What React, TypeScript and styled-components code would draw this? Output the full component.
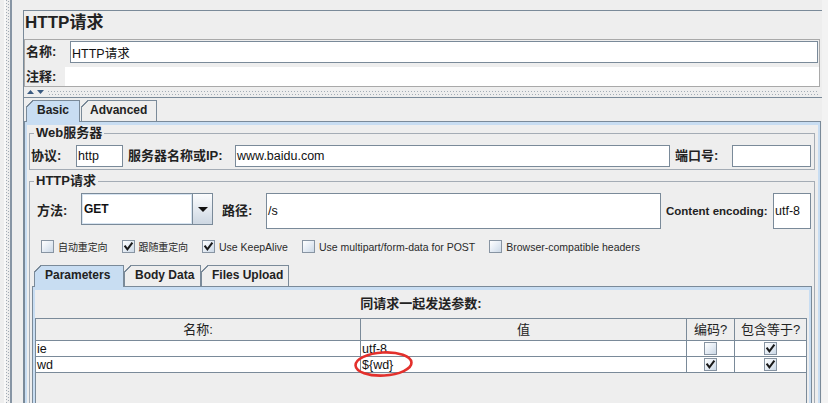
import React from "react";
import styled, { createGlobalStyle } from "styled-components";

const DARK = "#7a8a99";
const BLUE = "#c8ddf2";
const BG = "#eeeeee";
const ETCH = "#a4acb5";
const FONT = `"Liberation Sans", "Noto Sans CJK SC", sans-serif`;

const GlobalStyle = createGlobalStyle`
  * { box-sizing: border-box; }
  html, body { margin: 0; padding: 0; background: ${BG}; }
  body { font-family: ${FONT}; color: #1e1e1e; }
  #root { width: 828px; height: 403px; overflow: hidden; }
`;

const Page = styled.div`
  display: flex;
  align-items: flex-start;
  width: 828px;
  height: 403px;
  overflow: hidden;
  background: ${BG};
`;

const SideSplitter = styled.div`
  flex: none;
  align-self: stretch;
  width: 12px;
  padding-left: 6px;
  border-right: 2px solid #8795a4;
  background: linear-gradient(to right, ${BG} 0 4px, #f8f8f8 4px 6px, ${BG} 6px);
`;

const Grip = styled.div`
  width: 4px;
  height: 100%;
  background-image: repeating-linear-gradient(180deg, #a3acb6 0 1px, transparent 1px 3px),
    repeating-linear-gradient(180deg, #a3acb6 0 1px, transparent 1px 3px);
  background-size: 1px 100%, 1px 100%;
  background-position: 0 0, 2px 1px;
  background-repeat: no-repeat;
`;

const RightStrip = styled.div`
  flex: 1;
  align-self: stretch;
  background: #f3f3f3;
`;

const Main = styled.div`
  flex: none;
  width: 799px;
  margin: 10px 0 0 11px;
  border-left: 1px solid ${DARK};
  border-top: 1px solid ${DARK};
  display: flex;
  flex-direction: column;
`;

const Title = styled.div`
  height: 28px;
  line-height: 24px;
  padding-left: 1px;
  font-size: 17px;
  font-weight: bold;
  color: #222;
`;

const NamePanel = styled.div`
  margin-right: 2px;
  height: 48px;
  border: 1px solid #a9a9a9;
  display: flex;
  flex-direction: column;
`;

const FieldRow = styled.div<{ $h: number; $align?: string; $pr?: number }>`
  display: flex;
  align-items: ${(p) => p.$align ?? "center"};
  height: ${(p) => p.$h}px;
  padding: 0 ${(p) => p.$pr ?? 0}px 0 1px;
`;

const Label = styled.span<{ $w?: number; $ml?: number; $size?: number; $lh?: number }>`
  flex: none;
  width: ${(p) => (p.$w ? `${p.$w}px` : "auto")};
  margin-left: ${(p) => p.$ml ?? 0}px;
  font-size: ${(p) => p.$size ?? 13}px;
  line-height: ${(p) => p.$lh ?? 16}px;
  font-weight: bold;
  color: #222;
  white-space: nowrap;
`;

const Field = styled.div<{ $w?: number; $h?: number; $grow?: boolean; $plain?: boolean }>`
  flex: ${(p) => (p.$grow ? "1 1 0" : "none")};
  min-width: 0;
  width: ${(p) => (p.$w ? `${p.$w}px` : "auto")};
  height: ${(p) => p.$h ?? 22}px;
  display: flex;
  align-items: center;
  padding-left: 1px;
  background: #fff;
  border: ${(p) => (p.$plain ? "none" : `1px solid ${DARK}`)};
  font-size: 12.5px;
  color: #111;
  white-space: nowrap;
  overflow: hidden;
`;

const Splitter = styled.div`
  height: 10px;
  display: flex;
  align-items: center;
  padding: 0 3px 0 2px;
  gap: 2px;
`;

const DotLine = styled.div`
  flex: 1;
  height: 5px;
  margin-top: 3px;
  background-image: repeating-linear-gradient(90deg, #a3acb6 0 1px, transparent 1px 3px),
    repeating-linear-gradient(90deg, #a3acb6 0 1px, transparent 1px 3px);
  background-size: 100% 1px, 100% 1px;
  background-position: 0 0, 1px 3px;
  background-repeat: no-repeat;
`;

const Lower = styled.div`
  border-top: 1px solid ${DARK};
  padding-top: 2px;
  display: flex;
  flex-direction: column;
`;

const TabStrip = styled.div<{ $ml: number; $mt?: number }>`
  position: relative;
  z-index: 1;
  display: flex;
  align-items: flex-start;
  height: 22px;
  margin: ${(p) => p.$mt ?? 0}px 0 -1px ${(p) => p.$ml}px;
`;

const Tab = styled.div<{ $active?: boolean; $w: number }>`
  position: relative;
  flex: none;
  width: ${(p) => p.$w}px;
  height: ${(p) => (p.$active ? 22 : 21)}px;
  padding-left: 10px;
  line-height: 19px;
  font-size: 12px;
  font-weight: bold;
  color: #222;
  border: 1px solid ${DARK};
  border-bottom: none;
  background: ${(p) => (p.$active ? BLUE : BG)};
  white-space: nowrap;
  &::before {
    content: "";
    position: absolute;
    left: -1px;
    top: -1px;
    width: 7px;
    height: 7px;
    background: linear-gradient(
      to bottom right,
      ${BG} 0 46%,
      ${DARK} 46% 60%,
      transparent 60%
    );
  }
`;

const TabPanel = styled.div<{ $m?: string; $pad: string }>`
  margin: ${(p) => p.$m ?? "0 1px 0 0"};
  border: 1px solid ${DARK};
  box-shadow: inset 2px 3px 0 ${BLUE}, inset -2px 0 0 ${BLUE};
  padding: ${(p) => p.$pad};
  display: flex;
  flex-direction: column;
`;

const Group = styled.fieldset<{ $mt?: number }>`
  margin: ${(p) => p.$mt ?? 0}px 0 0 0;
  padding: 0 0 2px 0;
  min-width: 0;
  border: 1px solid ${ETCH};
  display: flex;
  flex-direction: column;
`;

const Legend = styled.legend`
  margin-left: 4px;
  padding: 0 2px;
  font-size: 13px;
  line-height: 14px;
  font-weight: bold;
  color: #222;
`;

const Row = styled.div<{ $mt: number; $h: number; $pl: number; $pr?: number }>`
  display: flex;
  align-items: center;
  height: ${(p) => p.$h}px;
  margin-top: ${(p) => p.$mt}px;
  padding: 0 ${(p) => p.$pr ?? 0}px 0 ${(p) => p.$pl}px;
`;

const Combo = styled.div`
  flex: none;
  align-self: flex-start;
  width: 132px;
  height: 32px;
  display: flex;
  border: 1px solid ${DARK};
  background: #fff;
`;

const ComboValue = styled.div`
  flex: 1;
  display: flex;
  align-items: center;
  padding-left: 2px;
  font-size: 12px;
  font-weight: bold;
  color: #111;
  box-shadow: inset 0 0 0 1px #d7e4f1;
`;

const ComboButton = styled.div`
  flex: none;
  width: 20px;
  display: flex;
  align-items: center;
  justify-content: center;
  border-left: 1px solid ${DARK};
  background: linear-gradient(180deg, #fbfcfd 0%, #e2e8ef 55%, #cdd7e2 100%);
`;

const CheckRow = styled.div`
  display: flex;
  align-items: center;
  height: 13px;
  margin-top: 11px;
  padding-left: 11px;
`;

const CheckItem = styled.label`
  display: flex;
  align-items: center;
  gap: 4px;
  margin-right: 14px;
  font-size: 10.5px;
  color: #2a2a2a;
  white-space: nowrap;
`;

const Cjk = styled.span`
  font-size: 10px;
  letter-spacing: -0.1px;
`;

const Box = styled.span`
  flex: none;
  width: 13px;
  height: 13px;
  border: 1px solid #8794a2;
  background: linear-gradient(135deg, #ffffff 0%, #e6edf5 50%, #cbd8e6 100%);
  display: inline-flex;
  align-items: center;
  justify-content: center;
`;

const Caption = styled.div`
  height: 31px;
  padding-top: 2px;
  line-height: 29px;
  text-align: center;
  font-size: 13px;
  font-weight: bold;
  color: #222;
`;

const TableWrap = styled.div`
  height: 130px;
  border: 1px solid ${DARK};
  border-bottom: none;
  background: ${BG};
`;

const GridRow = styled.div<{ $h: number }>`
  display: grid;
  grid-template-columns: 325px 326px 48px 71px;
  height: ${(p) => p.$h}px;
`;

const HeadCell = styled.div<{ $last?: boolean }>`
  border-right: ${(p) => (p.$last ? "none" : `1px solid ${DARK}`)};
  border-bottom: 1px solid ${DARK};
  text-align: center;
  line-height: 21px;
  font-size: 13px;
  color: #222;
  white-space: nowrap;
`;

const Cell = styled.div<{ $last?: boolean; $center?: boolean }>`
  position: relative;
  display: flex;
  align-items: center;
  justify-content: ${(p) => (p.$center ? "center" : "flex-start")};
  padding-left: ${(p) => (p.$center ? 0 : 1)}px;
  background: #fff;
  border-right: ${(p) => (p.$last ? "none" : `1px solid ${DARK}`)};
  border-bottom: 1px solid ${DARK};
  font-size: 12.5px;
  color: #111;
  white-space: nowrap;
`;

const Mark = styled.svg`
  position: absolute;
  left: -7px;
  top: -6px;
  overflow: visible;
  pointer-events: none;
`;

const CheckGlyph = () => (
  <svg width="11" height="11" viewBox="0 0 11 11">
    <path d="M2.2 5.4 L4.4 8.4 L8.8 2.4" fill="none" stroke="#1b1b1b" strokeWidth="2" strokeLinecap="square" />
  </svg>
);

const CheckBox = ({ on }: { on?: boolean }) => <Box>{on && <CheckGlyph />}</Box>;

const rows = [
  { name: "ie", value: "utf-8", enc: false, eq: true, mark: false },
  { name: "wd", value: "${wd}", enc: true, eq: true, mark: true },
];

export default function App() {
  return (
    <>
      <GlobalStyle />
      <Page>
        <SideSplitter>
          <Grip />
        </SideSplitter>
        <Main>
          <Title>HTTP请求</Title>
          <NamePanel>
            <FieldRow $h={24} $pr={1}>
              <Label $w={44}>名称:</Label>
              <Field $grow>HTTP请求</Field>
            </FieldRow>
            <FieldRow $h={22} $align="flex-end">
              <Label $w={39} $lh={19}>注释:</Label>
              <Field $grow $plain $h={19} />
            </FieldRow>
          </NamePanel>
          <Splitter>
            <svg width="20" height="6" viewBox="0 0 20 6">
              <path d="M1 5 L4.5 1 L8 5 Z" fill="#3a5a80" />
              <path d="M11 1 L18 1 L14.5 5 Z" fill="#3a5a80" />
            </svg>
            <DotLine />
          </Splitter>
          <Lower>
            <TabStrip $ml={2}>
              <Tab $active $w={54}>Basic</Tab>
              <Tab $w={76} style={{ marginLeft: 1, paddingLeft: 8 }}>Advanced</Tab>
            </TabStrip>
            <TabPanel $pad="4px 5px 0 4px">
              <Group>
                <Legend>Web服务器</Legend>
                <Row $mt={5} $h={22} $pl={1} $pr={3}>
                  <Label $w={45}>协议:</Label>
                  <Field $w={47}>http</Field>
                  <Label $w={107} $ml={5}>服务器名称或IP:</Label>
                  <Field $grow>www.baidu.com</Field>
                  <Label $w={57} $ml={5}>端口号:</Label>
                  <Field $w={79} />
                </Row>
              </Group>
              <Group $mt={4}>
                <Legend>HTTP请求</Legend>
                <Row $mt={5} $h={36} $pl={7} $pr={3}>
                  <Label $w={44}>方法:</Label>
                  <Combo>
                    <ComboValue>GET</ComboValue>
                    <ComboButton>
                      <svg width="10" height="5" viewBox="0 0 10 5">
                        <path d="M0 0 H10 L5 5 Z" fill="#111" />
                      </svg>
                    </ComboButton>
                  </Combo>
                  <Label $w={44} $ml={9}>路径:</Label>
                  <Field $grow $h={36}>/s</Field>
                  <Label $w={107} $ml={5} $size={11.5}>Content encoding:</Label>
                  <Field $w={38} $h={36}>utf-8</Field>
                </Row>
                <CheckRow>
                  <CheckItem><CheckBox /><Cjk>自动重定向</Cjk></CheckItem>
                  <CheckItem><CheckBox on /><Cjk>跟随重定向</Cjk></CheckItem>
                  <CheckItem><CheckBox on />Use KeepAlive</CheckItem>
                  <CheckItem><CheckBox />Use multipart/form-data for POST</CheckItem>
                  <CheckItem><CheckBox />Browser-compatible headers</CheckItem>
                </CheckRow>
                <TabStrip $ml={4} $mt={12}>
                  <Tab $active $w={90}>Parameters</Tab>
                  <Tab $w={77}>Body Data</Tab>
                  <Tab $w={88}>Files Upload</Tab>
                </TabStrip>
                <TabPanel $m="0 2px 0 2px" $pad="0 4px 0 2px">
                  <Caption>同请求一起发送参数:</Caption>
                  <TableWrap>
                    <GridRow $h={22}>
                      <HeadCell>名称:</HeadCell>
                      <HeadCell>值</HeadCell>
                      <HeadCell>编码?</HeadCell>
                      <HeadCell $last>包含等于?</HeadCell>
                    </GridRow>
                    {rows.map((r) => (
                      <GridRow $h={16} key={r.name}>
                        <Cell>{r.name}</Cell>
                        <Cell>
                          {r.value}
                          {r.mark && (
                            <Mark width="60" height="27" viewBox="0 0 60 27">
                              <ellipse cx="29.5" cy="13" rx="28" ry="11.5" fill="none" stroke="#e3302c" strokeWidth="2.6" transform="rotate(-3 29.5 13)" />
                            </Mark>
                          )}
                        </Cell>
                        <Cell $center><CheckBox on={r.enc} /></Cell>
                        <Cell $center $last><CheckBox on={r.eq} /></Cell>
                      </GridRow>
                    ))}
                  </TableWrap>
                </TabPanel>
              </Group>
            </TabPanel>
          </Lower>
        </Main>
        <RightStrip />
      </Page>
    </>
  );
}
